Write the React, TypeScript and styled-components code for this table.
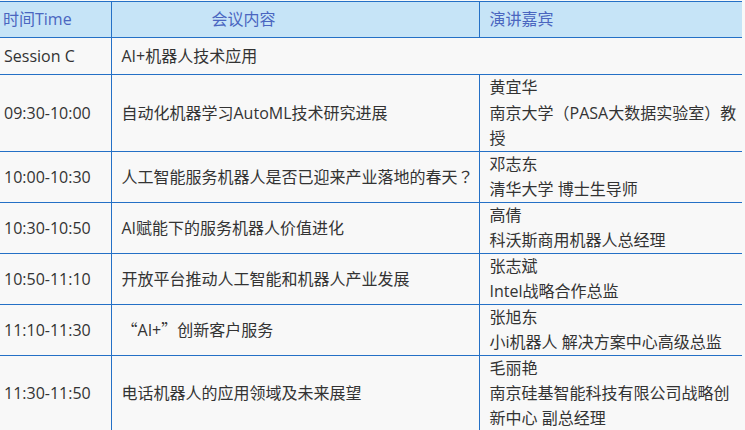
import React from "react";
import styled, { createGlobalStyle } from "styled-components";

const GlobalStyle = createGlobalStyle`
  html, body {
    margin: 0;
    padding: 0;
    background: #f8f8f8;
  }
  body {
    font-family: "Open Sans", "Noto Sans CJK SC", sans-serif;
    font-size: 16px;
    color: #333333;
  }
`;

const Page = styled.div`
  padding-top: 1px;
  width: 745px;
  overflow: hidden;
`;

const Table = styled.table`
  width: 742px;
  border-collapse: collapse;
  table-layout: fixed;
`;

const HeadRow = styled.tr`
  background: #c6e4f7;
`;

const Th = styled.th<{ $indent?: number }>`
  height: 35px;
  padding: 0 2px 0 ${(p) => p.$indent ?? 3}px;
  text-align: left;
  font-weight: normal;
  color: #4a66c0;
  line-height: 25px;
  border-top: 1px solid #2470c6;
  border-bottom: 1px solid #2470c6;
  border-left: 1px solid #2470c6;
  &:first-child {
    border-left: none;
  }
`;

const Td = styled.td<{ $pad?: number; $top?: boolean }>`
  height: 36px;
  padding: 0 2px 0 ${(p) => p.$pad ?? 10}px;
  line-height: 25px;
  vertical-align: ${(p) => (p.$top ? "top" : "middle")};
  border-bottom: 1px solid #2470c6;
  border-left: 1px solid #2470c6;
  &:first-child {
    border-left: none;
  }
`;

const Cjk = styled.span`
  font-family: "Noto Sans CJK TC", "Noto Sans CJK SC", sans-serif;
`;

type Row = {
  time: string;
  topic: React.ReactNode;
  speaker?: React.ReactNode[];
};

const rows: Row[] = [
  {
    time: "09:30-10:00",
    topic: "自动化机器学习AutoML技术研究进展",
    speaker: [
      "黄宜华",
      <>
        南京大学<Cjk>（</Cjk>PASA大数据实验室<Cjk>）</Cjk>教授
      </>,
    ],
  },
  {
    time: "10:00-10:30",
    topic: (
      <>
        人工智能服务机器人是否已迎来产业落地的春天<Cjk>？</Cjk>
      </>
    ),
    speaker: ["邓志东", "清华大学 博士生导师"],
  },
  {
    time: "10:30-10:50",
    topic: "AI赋能下的服务机器人价值进化",
    speaker: ["高倩", "科沃斯商用机器人总经理"],
  },
  {
    time: "10:50-11:10",
    topic: "开放平台推动人工智能和机器人产业发展",
    speaker: ["张志斌", "Intel战略合作总监"],
  },
  {
    time: "11:10-11:30",
    topic: (
      <>
        <Cjk>“</Cjk>AI+<Cjk>”</Cjk>创新客户服务
      </>
    ),
    speaker: ["张旭东", "小i机器人 解决方案中心高级总监"],
  },
  {
    time: "11:30-11:50",
    topic: "电话机器人的应用领域及未来展望",
    speaker: ["毛丽艳", "南京硅基智能科技有限公司战略创新中心 副总经理"],
  },
];

const SpeakerLine = styled.div``;

export default function App() {
  return (
    <Page>
      <GlobalStyle />
      <Table>
        <colgroup>
          <col style={{ width: 111 }} />
          <col style={{ width: 368 }} />
          <col />
        </colgroup>
        <thead>
          <HeadRow>
            <Th>时间Time</Th>
            <Th $indent={100}>会议内容</Th>
            <Th $indent={10}>演讲嘉宾</Th>
          </HeadRow>
        </thead>
        <tbody>
          <tr>
            <Td $pad={4}>Session C</Td>
            <Td colSpan={2}>AI+机器人技术应用</Td>
          </tr>
          {rows.map((r, i) => (
            <tr key={i}>
              <Td $pad={4}>{r.time}</Td>
              <Td>{r.topic}</Td>
              <Td $top>
                {r.speaker?.map((s, j) => (
                  <SpeakerLine key={j}>{s}</SpeakerLine>
                ))}
              </Td>
            </tr>
          ))}
        </tbody>
      </Table>
    </Page>
  );
}
